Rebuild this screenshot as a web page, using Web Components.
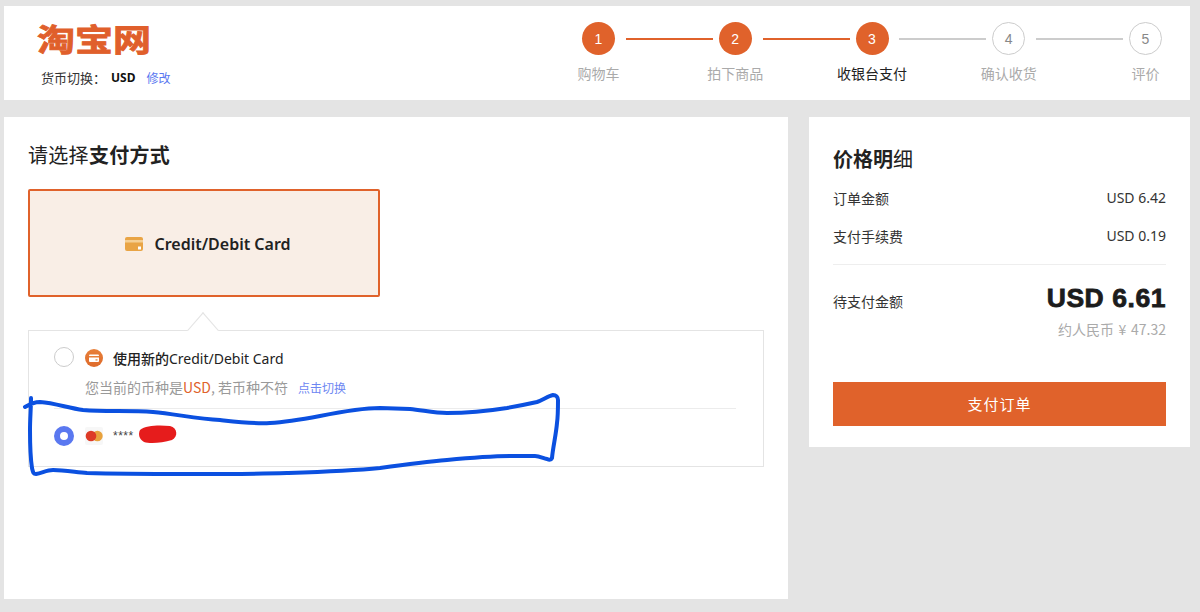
<!DOCTYPE html>
<html lang="zh">
<head>
<meta charset="utf-8">
<title>收银台</title>
<style>
   html, body { margin: 0; height: 100%; }
   body {
      background: #e4e4e4;
      font-family: "Noto Sans", "Noto Sans CJK SC", sans-serif;
      color: #222;
   }
</style>
</head>
<body>
<checkout-page>
   <top-bar slot="top"></top-bar>
   <pay-panel slot="left"></pay-panel>
   <price-panel slot="right"></price-panel>
</checkout-page>

<script>
const define = ( name, html ) => {
   customElements.define( name, class extends HTMLElement {
      constructor() {
         super();
         this.attachShadow( { mode: "open" } ).innerHTML = html;
      }
   } );
};

/* == [ page frame ] == */
define( "checkout-page", `
   <style>
      :host { display: block; padding: 6px 10px 13px 4px; height: 593px; box-sizing: border-box; }
      main {
         display: grid;
         grid-template-columns: 784px 381px;
         justify-content: space-between;
         align-items: start;
         margin-top: 17px;
      }
   </style>
   <slot name="top"></slot>
   <main>
      <slot name="left"></slot>
      <slot name="right"></slot>
   </main>
` );

/* == [ header ] == */
define( "top-bar", `
   <style>
      :host {
         display: flex;
         justify-content: space-between;
         height: 94px;
         background: #fff;
      }
      .brand { padding: 17px 0 0 33px; }
      .logo {
         font: 700 38px/30px "Noto Sans CJK SC", sans-serif;
         color: #e05f2b;
         -webkit-text-stroke: 1px #e05f2b;
         white-space: nowrap;
         transform: scaleY(.82);
      }
      .currency {
         display: flex;
         align-items: center;
         margin: 16px 0 0 4px;
         font: 13px/18px "Noto Sans CJK SC", sans-serif;
         color: #333;
      }
      .currency b { font: 700 12px/18px "Noto Sans", sans-serif; color: #111; margin-left: 5px; }
      .currency a { margin-left: 11px; font-size: 12px; color: #5a78f0; }
   </style>
   <div class="brand">
      <div class="logo">淘宝网</div>
      <div class="currency">货币切换：<b>USD</b><a>修改</a></div>
   </div>
   <step-bar></step-bar>
` );

define( "step-bar", `
   <style>
      :host {
         display: flex;
         align-items: flex-start;
         padding: 16px 28px 0 0;
      }
      .step { width: 33px; display: flex; flex-direction: column; align-items: center; }
      .num {
         box-sizing: border-box;
         width: 33px;
         height: 33px;
         border-radius: 50%;
         display: grid;
         place-items: center;
         font: 14px "Liberation Sans", sans-serif;
         background: #e0622b;
         color: #fff;
      }
      .todo .num { background: #fff; border: 1px solid #ccc; color: #888; }
      .label {
         margin-top: 7px;
         font: 14px/22px "Noto Sans CJK SC", sans-serif;
         color: #aaa;
         white-space: nowrap;
      }
      .now .label { color: #222; }
      .line { width: 87px; height: 2px; margin: 16px 6px 0 10.75px; background: #e0622b; }
      .line.off { background: #ccc; }
   </style>
   <div class="step"><div class="num">1</div><div class="label">购物车</div></div>
   <div class="line"></div>
   <div class="step"><div class="num">2</div><div class="label">拍下商品</div></div>
   <div class="line"></div>
   <div class="step now"><div class="num">3</div><div class="label">收银台支付</div></div>
   <div class="line off"></div>
   <div class="step todo"><div class="num">4</div><div class="label">确认收货</div></div>
   <div class="line off"></div>
   <div class="step todo"><div class="num">5</div><div class="label">评价</div></div>
` );

/* == [ payment panel ] == */
define( "pay-panel", `
   <style>
      :host {
         display: block;
         position: relative;
         box-sizing: border-box;
         height: 482px;
         padding: 23px 24px 0 24px;
         background: #fff;
      }
      h2 {
         margin: 0;
         font: 400 20px/30px "Noto Sans CJK SC", sans-serif;
         letter-spacing: .3px;
         color: #222;
      }
      h2 b { font-weight: 700; }
      .tile {
         box-sizing: border-box;
         width: 352px;
         height: 108px;
         margin-top: 19px;
         padding: 1px 0 0 8px;
         display: flex;
         align-items: center;
         justify-content: center;
         gap: 11px;
         background: #f9eee6;
         border: 2px solid #e0622b;
         border-radius: 2px;
         font: 600 16px/20px "Noto Sans", sans-serif;
         color: #222;
      }
      .box {
         position: relative;
         box-sizing: border-box;
         width: 736px;
         height: 137px;
         margin-top: 33px;
         padding: 0 27px 0 25px;
         border: 1px solid #e4e4e4;
      }
      .box::before {
         content: "";
         position: absolute;
         left: 163px;
         top: -12px;
         width: 21px;
         height: 21px;
         background: #fff;
         border: solid #e4e4e4;
         border-width: 1px 0 0 1px;
         transform: scaleY(1.15) rotate(45deg);
      }
      .row { display: flex; align-items: center; position: relative; }
      .new { padding-top: 17px; height: 19px; }
      .radio {
         box-sizing: border-box;
         width: 20px;
         height: 20px;
         border: 1px solid #ccc;
         border-radius: 50%;
         background: #fff;
         flex: none;
      }
      .radio.on { border: 6px solid #5a78f0; }
      .ico { margin-left: 11px; flex: none; display: block; }
      .name { margin: 2px 0 0 10px; font: 500 14px/20px "Noto Sans CJK SC", "Noto Sans", sans-serif; color: #222; }
      .name span { font-family: "Noto Sans", sans-serif; font-weight: 400; }
      .hint {
         margin: 10px 0 0 31px;
         font: 14px/20px "Noto Sans CJK SC", sans-serif;
         color: #999;
      }
      .hint em { font-style: normal; color: #e0622b; }
      .hint a { margin-left: 7px; font-size: 12px; color: #6d86f2; }
      .sep { height: 1px; margin-top: 10px; background: #ececec; }
      .saved { margin-top: 17px; }
      .mask { margin-left: 10px; font: 12px/18px "Liberation Sans", sans-serif; color: #444; letter-spacing: .5px; }
      .scribble { position: absolute; left: 0; top: 0; pointer-events: none; }
   </style>
   <h2>请选择<b>支付方式</b></h2>
   <div class="tile">
      <svg width="18" height="14" viewBox="0 0 18 14">
         <rect width="18" height="14" rx="2" fill="#e9a445"/>
         <rect y="3" width="18" height="2.5" fill="#f5cf94"/>
         <rect x="13" y="9.5" width="3" height="3" fill="#fff"/>
      </svg>
      <span>Credit/Debit Card</span>
   </div>
   <div class="box">
      <div class="row new">
         <div class="radio" style="margin-top:-1px"></div>
         <svg class="ico" width="18" height="18" viewBox="0 0 18 18">
            <defs><linearGradient id="g" x1="0" y1="0" x2="0" y2="1"><stop offset="0" stop-color="#e8803a"/><stop offset="1" stop-color="#de6a2a"/></linearGradient></defs>
            <circle cx="9" cy="9" r="9" fill="url(#g)"/>
            <rect x="4" y="5.5" width="10" height="7.5" rx="1" fill="#fff"/>
            <rect x="4" y="7" width="10" height="1.5" fill="#e8803a"/>
            <rect x="10.5" y="10.3" width="2" height="1.2" fill="#e8803a"/>
         </svg>
         <div class="name">使用新的<span>Credit/Debit Card</span></div>
      </div>
      <div class="hint">您当前的币种是<em>USD</em>, 若币种不符 <a>点击切换</a></div>
      <div class="sep"></div>
      <div class="row saved">
         <div class="radio on"></div>
         <svg class="ico" width="18" height="18" viewBox="0 0 18 18">
            <rect width="18" height="18" rx="2" fill="#f7f7f7"/>
            <circle cx="12.4" cy="9" r="5.3" fill="#e8a23c"/>
            <circle cx="6" cy="9" r="5.3" fill="#dd3b27"/>
         </svg>
         <div class="mask">****</div>
      </div>
   </div>
   <svg class="scribble" width="784" height="482" viewBox="4 117 784 482" fill="none">
      <path d="M140 430 C146 425 160 425 170 426 C178 428 178 437 172 440 C162 443 150 444 144 442 C139 439 138 434 140 430Z" fill="#e61c1c"/>
      <path d="M25 407 C30 404 34 402 40 402 C55 403 68 408 83 410 C105 412 130 410 153 412 C175 414 198 419 220 420 C238 422 254 424 270 423 C288 422 304 419 320 416 C340 412 360 408 380 408 L410 409 C422 410 434 413 447 413 C468 413 488 411 507 408 C518 406 528 404 537 402 C543 400 548 396 553 395 C556 395 558 397 558 400 C558 408 558 416 557 423 C556 435 553 447 552 458 C551 460 549 460 547 459 C543 458 539 456 535 456 L513 456 C490 456 468 458 447 460 C424 462 402 465 380 468 C350 471 318 472 287 473 C254 474 220 474 187 474 C153 474 120 474 87 473 C75 472 64 470 53 470 C47 470 42 473 36 474 C33 474 33 472 32 468 C30 455 30 442 30 430 C30 419 31 408 31 398" stroke="#0b50e0" stroke-width="4" stroke-linecap="round" stroke-linejoin="round"/>
   </svg>
` );

/* == [ price panel ] == */
define( "price-row", `
   <style>
      :host {
         display: flex;
         justify-content: space-between;
         align-items: center;
         height: 38px;
         font: 14px/20px "Noto Sans CJK SC", "Noto Sans", sans-serif;
         color: #333;
      }
      .v { font-family: "Noto Sans", sans-serif; }
   </style>
   <slot></slot>
   <span class="v"><slot name="value"></slot></span>
` );

define( "price-panel", `
   <style>
      :host {
         display: block;
         box-sizing: border-box;
         height: 330px;
         padding: 29px 24px 0 24px;
         background: #fff;
      }
      h3 { margin: 0 0 7px; font: 400 20px/26px "Noto Sans CJK SC", sans-serif; color: #222; }
      h3 b { font-weight: 700; }
      hr { border: 0; height: 1px; margin: 9px 0 0; background: #eee; }
      .total { display: flex; justify-content: space-between; align-items: center; height: 66px; }
      .total span { font: 14px/20px "Noto Sans CJK SC", sans-serif; color: #333; margin-top: 5px; }
      .total b {
         font: 700 26.5px/30px "Liberation Sans", sans-serif;
         letter-spacing: .55px;
         -webkit-text-stroke: .8px #1c1c1c;
         color: #1c1c1c;
      }
      .rmb {
         margin-top: -12px;
         text-align: right;
         font: 14px/20px "Noto Sans CJK SC", "Noto Sans", sans-serif;
         word-spacing: 1.5px;
         color: #aaa;
      }
      button {
         display: block;
         width: 100%;
         height: 44px;
         margin-top: 43px;
         padding: 0 0 2px;
         border: 0;
         background: #e0622b;
         color: #fff;
         font: 15px "Noto Sans CJK SC", sans-serif;
         letter-spacing: 1px;
      }
   </style>
   <h3><b>价格明</b>细</h3>
   <price-row>订单金额<span slot="value">USD 6.42</span></price-row>
   <price-row>支付手续费<span slot="value">USD 0.19</span></price-row>
   <hr>
   <div class="total"><span>待支付金额</span><b>USD 6.61</b></div>
   <div class="rmb">约人民币 ¥ 47.32</div>
   <button>支付订单</button>
` );
</script>
</body>
</html>
